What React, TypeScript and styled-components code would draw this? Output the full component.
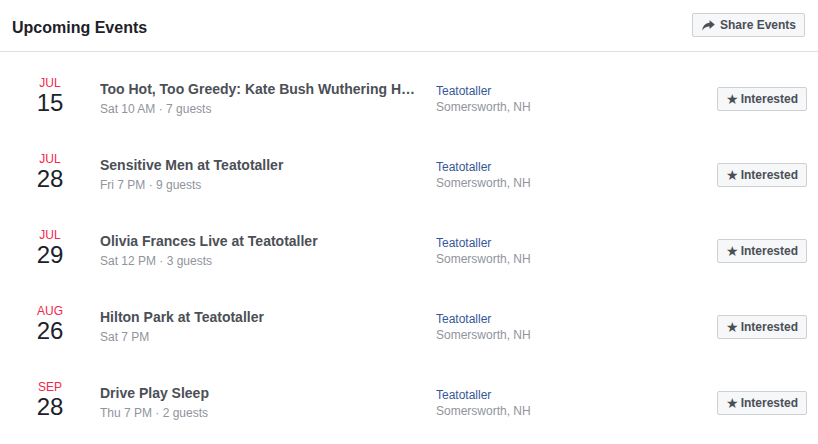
import React from "react";
import styled, { createGlobalStyle } from "styled-components";

const Global = createGlobalStyle`
  html, body { margin: 0; padding: 0; background: #fff; }
  body { font-family: "Liberation Sans", Arial, Helvetica, sans-serif; -webkit-font-smoothing: antialiased; }
  * { box-sizing: border-box; }
`;

const Panel = styled.div`
  width: 818px;
  background: #fff;
`;

const Header = styled.header`
  height: 52px;
  display: flex;
  justify-content: space-between;
  align-items: flex-start;
  padding: 0 13px 0 12px;
  border-bottom: 1px solid #dddfe2;
`;

const Title = styled.h2`
  margin: 18px 0 0;
  font-size: 16px;
  line-height: 20px;
  font-weight: bold;
  color: #1d2129;
`;

const Button = styled.button<{ $top: number; $gap: number; $padLeft: number }>`
  margin-top: ${(p) => p.$top}px;
  height: 24px;
  display: inline-flex;
  align-items: center;
  gap: ${(p) => p.$gap}px;
  padding: 0 8px 0 ${(p) => p.$padLeft}px;
  background: #f6f7f9;
  border: 1px solid #ced0d4;
  border-radius: 2px;
  font-family: inherit;
  font-size: 12px;
  font-weight: bold;
  color: #4b4f56;
  white-space: nowrap;
  cursor: pointer;
`;

const StarGlyph = styled.span`
  font-family: "DejaVu Sans", sans-serif;
  font-size: 14px;
  font-weight: normal;
  line-height: 1;
  color: #4b4f56;
  margin-top: -1px;
`;

const List = styled.ul`
  list-style: none;
  margin: 0;
  padding: 12px 0 0;
`;

const Row = styled.li`
  height: 76px;
  display: flex;
  align-items: flex-start;
  padding-right: 11px;
`;

const DateCol = styled.div`
  width: 76px;
  margin-left: 12px;
  padding-top: 12px;
  display: flex;
  flex-direction: column;
  align-items: center;
`;

const Month = styled.span`
  font-size: 12px;
  line-height: 14px;
  color: #f02849;
`;

const Day = styled.span`
  font-size: 24px;
  line-height: 25px;
  color: #1d2129;
`;

const Info = styled.div`
  width: 318px;
  margin-left: 12px;
  padding-top: 16px;
  min-width: 0;
`;

const EventName = styled.div`
  font-size: 14px;
  line-height: 18px;
  font-weight: bold;
  color: #4b4f56;
  white-space: nowrap;
  overflow: hidden;
  text-overflow: ellipsis;
`;

const Meta = styled.div`
  margin-top: 3px;
  font-size: 12px;
  line-height: 16px;
  color: #90949c;
`;

const Venue = styled.div`
  flex: 1;
  margin-left: 18px;
  padding-top: 19px;
`;

const VenueName = styled.a`
  display: block;
  font-size: 12px;
  line-height: 16px;
  color: #365899;
  text-decoration: none;
`;

const Place = styled.div`
  margin-top: 1px;
  font-size: 12px;
  line-height: 15px;
  color: #90949c;
`;

const ShareIcon = () => (
  <svg width="13" height="11" viewBox="0 0 13 11" aria-hidden="true">
    <path
      d="M7.6 0.3 L12.8 4.6 L7.6 8.9 V6.4 C4.4 6.3 2 7.6 0.2 10.6 C0.7 6.2 3.3 3.1 7.6 2.8 Z"
      fill="#4b4f56"
    />
  </svg>
);

const events = [
  { month: "JUL", day: "15", name: "Too Hot, Too Greedy: Kate Bush Wuthering Heights Day Celebration", meta: "Sat 10 AM · 7 guests" },
  { month: "JUL", day: "28", name: "Sensitive Men at Teatotaller", meta: "Fri 7 PM · 9 guests" },
  { month: "JUL", day: "29", name: "Olivia Frances Live at Teatotaller", meta: "Sat 12 PM · 3 guests" },
  { month: "AUG", day: "26", name: "Hilton Park at Teatotaller", meta: "Sat 7 PM" },
  { month: "SEP", day: "28", name: "Drive Play Sleep", meta: "Thu 7 PM · 2 guests" },
];

export default function App() {
  return (
    <Panel>
      <Global />
      <Header>
        <Title>Upcoming Events</Title>
        <Button $top={13} $gap={5} $padLeft={9}>
          <ShareIcon />
          Share Events
        </Button>
      </Header>
      <List>
        {events.map((e) => (
          <Row key={e.month + e.day}>
            <DateCol>
              <Month>{e.month}</Month>
              <Day>{e.day}</Day>
            </DateCol>
            <Info>
              <EventName>{e.name}</EventName>
              <Meta>{e.meta}</Meta>
            </Info>
            <Venue>
              <VenueName href="#">Teatotaller</VenueName>
              <Place>Somersworth, NH</Place>
            </Venue>
            <Button $top={23} $gap={2} $padLeft={8}>
              <StarGlyph>★</StarGlyph>
              Interested
            </Button>
          </Row>
        ))}
      </List>
    </Panel>
  );
}
